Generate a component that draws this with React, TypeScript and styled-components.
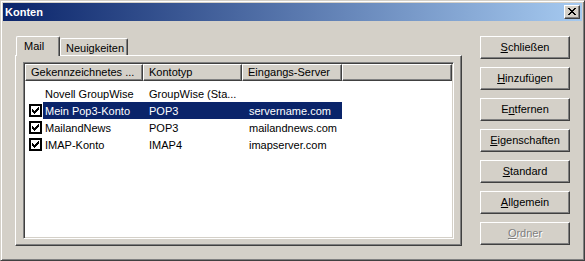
import React from "react";
import styled, { createGlobalStyle, css } from "styled-components";

const Global = createGlobalStyle`
  html, body { margin: 0; padding: 0; background: #d4d0c8; }
  body { font-family: "Liberation Sans", Arial, sans-serif; font-size: 11px; color: #000; }
  * { box-sizing: border-box; }
`;

const Window = styled.div`
  width: 585px;
  height: 261px;
  background: #d4d0c8;
  border: 1px solid;
  border-color: #d4d0c8 #404040 #404040 #d4d0c8;
  box-shadow: inset 1px 1px #ffffff, inset -1px -1px #808080;
  padding: 2px;
  display: flex;
  flex-direction: column;
`;

const TitleBar = styled.div`
  height: 18px;
  flex: none;
  display: flex;
  align-items: center;
  justify-content: space-between;
  padding: 0 2px 0 2px;
  background: linear-gradient(to right, #0a246a, #a6caf0);
`;

const Title = styled.span`
  color: #fff;
  font-weight: bold;
  font-size: 11px;
  line-height: 18px;
`;

const CloseButton = styled.div`
  width: 16px;
  height: 14px;
  background: #d4d0c8;
  border: 1px solid;
  border-color: #ffffff #404040 #404040 #ffffff;
  box-shadow: inset -1px -1px #808080;
  display: flex;
  align-items: center;
  justify-content: center;
  padding-bottom: 1px;
  padding-right: 1px;
`;

const Body = styled.div`
  flex: 1;
  display: flex;
  padding: 15px 12px 0 12px;
`;

const TabControl = styled.div`
  width: 447px;
  display: flex;
  flex-direction: column;
`;

const TabsRow = styled.div`
  height: 19px;
  display: flex;
  align-items: flex-end;
  padding-left: 1px;
  position: relative;
  z-index: 1;
`;

const Tab = styled.div<{ $active?: boolean }>`
  background: #d4d0c8;
  border-top: 1px solid #ffffff;
  border-left: 1px solid #ffffff;
  border-right: 1px solid #404040;
  box-shadow: inset -1px 0 #808080;
  border-radius: 2px 2px 0 0;
  display: flex;
  align-items: center;
  ${(p) =>
    p.$active
      ? css`
          height: 20px;
          margin-bottom: -1px;
          padding: 0 6px 1px 7px;
          width: 44px;
        `
      : css`
          height: 17px;
          padding: 1px 4px 0 5px;
          width: 68px;
        `}
`;

const Panel = styled.div`
  height: 191px;
  border: 1px solid;
  border-color: #ffffff #404040 #404040 #ffffff;
  box-shadow: inset -1px -1px #808080;
  padding: 6px 7px 6px 7px;
`;

const List = styled.div`
  width: 100%;
  height: 100%;
  background: #fff;
  border: 1px solid;
  border-color: #808080 #ffffff #ffffff #808080;
  box-shadow: inset 1px 1px #404040, inset -1px -1px #d4d0c8;
  padding: 1px;
  display: flex;
  flex-direction: column;
`;

const Header = styled.div`
  height: 17px;
  flex: none;
  display: flex;
`;

const HeaderCell = styled.div<{ $w?: number }>`
  ${(p) => (p.$w ? `width: ${p.$w}px; flex: none;` : "flex: 1;")}
  height: 17px;
  background: #d4d0c8;
  border: 1px solid;
  border-color: #ffffff #404040 #404040 #ffffff;
  box-shadow: inset -1px -1px #808080;
  padding-left: 5px;
  line-height: 15px;
  white-space: nowrap;
  overflow: hidden;
`;

const Rows = styled.div`
  padding-top: 4px;
  display: flex;
  flex-direction: column;
`;

const Row = styled.div`
  height: 17px;
  display: flex;
`;

const CheckCell = styled.div`
  width: 18px;
  flex: none;
  display: flex;
  align-items: center;
  padding-left: 4px;
`;

const Selectable = styled.div<{ $selected?: boolean }>`
  display: flex;
  height: 17px;
  background: ${(p) => (p.$selected ? "#0a246a" : "transparent")};
  color: ${(p) => (p.$selected ? "#ffffff" : "#000000")};
`;

const Cell = styled.div<{ $w: number; $pl: number }>`
  width: ${(p) => p.$w}px;
  padding-left: ${(p) => p.$pl}px;
  line-height: 18px;
  white-space: nowrap;
  overflow: hidden;
`;

const CheckBox = styled.div`
  width: 13px;
  height: 13px;
  border: 2px solid #000;
  background: #fff;
  display: flex;
  align-items: center;
  justify-content: center;
`;

const Buttons = styled.div`
  margin-left: 18px;
  width: 90px;
  display: flex;
  flex-direction: column;
  gap: 8px;
`;

const Button = styled.div<{ $disabled?: boolean }>`
  height: 23px;
  background: #d4d0c8;
  border: 1px solid;
  border-color: #ffffff #404040 #404040 #ffffff;
  box-shadow: inset -1px -1px #808080;
  display: flex;
  align-items: center;
  justify-content: center;
  padding-bottom: 1px;
  color: ${(p) => (p.$disabled ? "#808080" : "#000")};
  text-shadow: ${(p) => (p.$disabled ? "1px 1px #ffffff" : "none")};
  u { text-underline-offset: 1px; }
`;

const pix = (rows: string[], color: string) =>
  rows.flatMap((r, y) =>
    r.split("").map((c, x) =>
      c === "X" ? <rect key={`${x}-${y}`} x={x} y={y} width={1} height={1} fill={color} /> : null
    )
  );

const CloseGlyph = () => (
  <svg width="8" height="7" viewBox="0 0 8 7" shapeRendering="crispEdges">
    {pix(["XX....XX", ".XX..XX.", "..XXXX..", "...XX...", "..XXXX..", ".XX..XX.", "XX....XX"], "#000")}
  </svg>
);

const CheckGlyph = () => (
  <svg width="7" height="7" viewBox="0 0 7 7" shapeRendering="crispEdges">
    {pix(["......X", ".....XX", "X...XXX", "XX.XXX.", "XXXXX..", ".XXX...", "..X...."], "#000")}
  </svg>
);

type Account = { name: string; type: string; server: string; checked: boolean; selected?: boolean };

const accounts: Account[] = [
  { name: "Novell GroupWise", type: "GroupWise (Sta...", server: "", checked: false },
  { name: "Mein Pop3-Konto", type: "POP3", server: "servername.com", checked: true, selected: true },
  { name: "MailandNews", type: "POP3", server: "mailandnews.com", checked: true },
  { name: "IMAP-Konto", type: "IMAP4", server: "imapserver.com", checked: true },
];

const buttons: { pre: string; key: string; post: string; disabled?: boolean }[] = [
  { pre: "", key: "S", post: "chließen" },
  { pre: "", key: "H", post: "inzufügen" },
  { pre: "E", key: "n", post: "tfernen" },
  { pre: "", key: "E", post: "igenschaften" },
  { pre: "", key: "S", post: "tandard" },
  { pre: "", key: "A", post: "llgemein" },
  { pre: "", key: "O", post: "rdner", disabled: true },
];

export default function App() {
  return (
    <>
      <Global />
      <Window>
        <TitleBar>
          <Title>Konten</Title>
          <CloseButton>
            <CloseGlyph />
          </CloseButton>
        </TitleBar>
        <Body>
          <TabControl>
            <TabsRow>
              <Tab $active>Mail</Tab>
              <Tab>Neuigkeiten</Tab>
            </TabsRow>
            <Panel>
              <List>
                <Header>
                  <HeaderCell $w={118}>Gekennzeichnetes ...</HeaderCell>
                  <HeaderCell $w={99}>Kontotyp</HeaderCell>
                  <HeaderCell $w={100}>Eingangs-Server</HeaderCell>
                  <HeaderCell />
                </Header>
                <Rows>
                  {accounts.map((a) => (
                    <Row key={a.name}>
                      <CheckCell>
                        {a.checked && (
                          <CheckBox>
                            <CheckGlyph />
                          </CheckBox>
                        )}
                      </CheckCell>
                      <Selectable $selected={a.selected}>
                        <Cell $w={100} $pl={2}>{a.name}</Cell>
                        <Cell $w={99} $pl={6}>{a.type}</Cell>
                        <Cell $w={100} $pl={7}>{a.server}</Cell>
                      </Selectable>
                    </Row>
                  ))}
                </Rows>
              </List>
            </Panel>
          </TabControl>
          <Buttons>
            {buttons.map((b) => (
              <Button key={b.post} $disabled={b.disabled}>
                <span>
                  {b.pre}
                  <u>{b.key}</u>
                  {b.post}
                </span>
              </Button>
            ))}
          </Buttons>
        </Body>
      </Window>
    </>
  );
}
